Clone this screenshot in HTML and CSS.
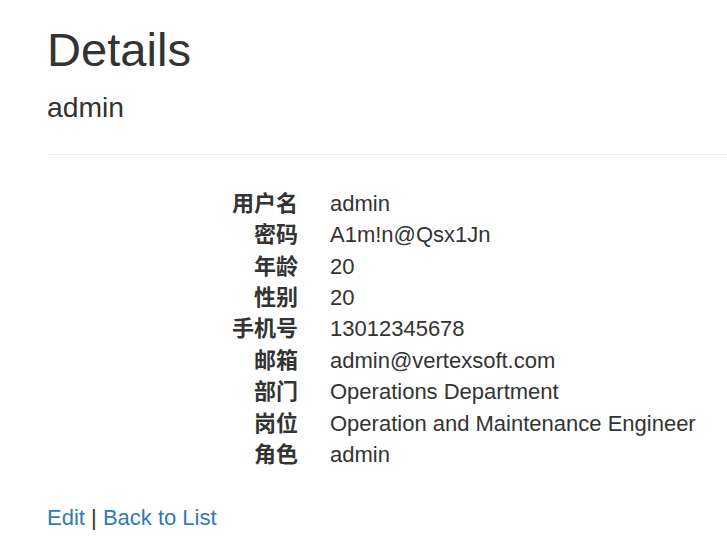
FILE: index.html
```html
<!DOCTYPE html>
<html lang="zh">
<head>
<meta charset="utf-8">
<title>Details</title>
<link rel="stylesheet" href="styles.css">
</head>
<body>
<main class="page">
  <h2 class="title">Details</h2>
  <section>
    <h4 class="subtitle">admin</h4>
    <hr class="rule">
    <dl class="fields">
      <dt>用户名</dt><dd>admin</dd>
      <dt>密码</dt><dd>A1m!n@Qsx1Jn</dd>
      <dt>年龄</dt><dd>20</dd>
      <dt>性别</dt><dd>20</dd>
      <dt>手机号</dt><dd>13012345678</dd>
      <dt>邮箱</dt><dd>admin@vertexsoft.com</dd>
      <dt>部门</dt><dd>Operations Department</dd>
      <dt>岗位</dt><dd>Operation and Maintenance Engineer</dd>
      <dt>角色</dt><dd>admin</dd>
    </dl>
  </section>
  <p class="actions"><a href="#">Edit</a> | <a href="#">Back to List</a></p>
</main>
</body>
</html>
```
FILE: styles.css
```css
html, body {
  margin: 0;
  padding: 0;
  background: #fff;
}
body {
  font-family: "Liberation Sans", Arial, "Noto Sans CJK SC", sans-serif;
  font-size: 22px;
  line-height: 31.43px;
  color: #333;
  overflow: hidden;
}
.page {
  padding: 0 0 0 47px;
}
.title {
  font-size: 47.1px;
  font-weight: 500;
  line-height: 51.8px;
  margin: 24px 0 16px;
}
.subtitle {
  font-size: 28.3px;
  font-weight: 500;
  line-height: 31.1px;
  margin: 16px 0 15.7px;
}
.rule {
  border: 0;
  border-top: 1px solid #eee;
  margin: 31.4px 0 32.5px;
  height: 0;
}
.fields {
  display: grid;
  grid-template-columns: 251px 1fr;
  grid-auto-rows: 31.43px;
  column-gap: 32px;
  margin: 0 0 31.4px;
}
.fields dt {
  font-weight: 700;
  text-align: right;
  white-space: nowrap;
}
.fields dd {
  margin: 0;
  white-space: nowrap;
}
.actions {
  margin: 0;
}
.actions a {
  color: #337ab7;
  text-decoration: none;
}
```
